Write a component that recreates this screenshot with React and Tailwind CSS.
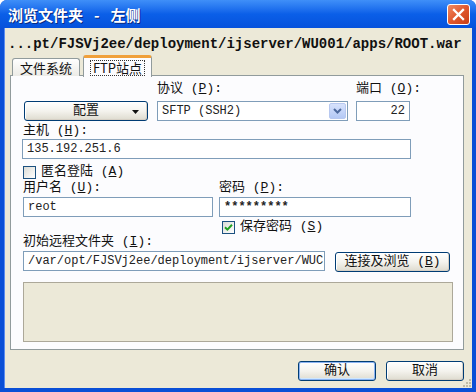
import React from "react";

const MONO = "font-['Liberation_Mono','Noto_Sans_CJK_SC',monospace]";
const LABEL = "font-['Liberation_Mono','Noto_Sans_CJK_SC',monospace] text-[13px] leading-[16px] h-[16px] text-[#111] whitespace-pre";
const INPUT = "h-[20px] border border-[#7f9db9] bg-white flex items-center pl-[4px] font-['Liberation_Mono','Noto_Sans_CJK_SC',monospace] text-[12px] text-[#222] whitespace-pre overflow-hidden";
const BTN = "h-[20px] border border-[#003c74] rounded-[3px] bg-gradient-to-b from-white via-[#f4f3ee] to-[#dedbcf] flex items-center justify-center font-['Liberation_Mono','Noto_Sans_CJK_SC',monospace] text-[13px] text-[#111] whitespace-pre shadow-[inset_-1px_-1px_0_#d6d0c5,inset_1px_1px_0_#ffffff]";

function Check({ checked }) {
  return (
    <div className="w-[13px] h-[13px] border border-[#1c5180] bg-gradient-to-br from-[#dcdcd6] to-white flex items-center justify-center">
      {checked && (
        <svg width="9" height="9" viewBox="0 0 9 9">
          <path d="M1 4.2 L3.4 6.6 L8 1.8" fill="none" stroke="#21a121" strokeWidth="2" />
        </svg>
      )}
    </div>
  );
}

export default function App() {
  return (
    <div className="w-[476px] h-[392px] bg-[#0a4fd6] flex flex-col rounded-t-[7px] overflow-hidden font-['Noto_Sans_CJK_SC','Liberation_Sans',sans-serif]">
      <div className="h-[28px] shrink-0 flex items-center pl-[8px] pr-[6px] bg-gradient-to-b from-[#3f8ff8] via-[#0b5fe8] to-[#0652dc]">
        <span className="text-white font-bold text-[15px] leading-none whitespace-pre [text-shadow:1px_1px_0_#0a2a80] flex items-center">
          浏览文件夹<span className="mx-[11px]">-</span>左侧
        </span>
        <div className="ml-auto w-[23px] h-[21px] rounded-[3px] border border-white bg-gradient-to-br from-[#f08a62] via-[#e0582e] to-[#c83d14] flex items-center justify-center">
          <svg width="13" height="13" viewBox="0 0 13 13">
            <path d="M2 2 L11 11 M11 2 L2 11" stroke="white" strokeWidth="2.3" strokeLinecap="square" />
          </svg>
        </div>
      </div>

      <div className="relative flex-1 ml-[4px] mr-[4px] mb-[4px] bg-[#ece9d8] flex flex-col border-l border-[#5a8cf0]">
        <div className={`pt-[8px] pl-[3px] h-[24px] text-[14px] leading-[16px] font-bold text-[#111] whitespace-pre ${MONO}`}>
          ...pt/FJSVj2ee/deployment/ijserver/WU001/apps/ROOT.war
        </div>

        <div className="mt-[3px] h-[21px] flex items-end pl-[7px] relative z-10">
          <div className="w-[68px] h-[18px] border border-b-0 border-[#919b9c] rounded-t-[3px] bg-gradient-to-b from-white to-[#ecebe6] flex items-center justify-center text-[13px] leading-none text-[#111]">
            文件系统
          </div>
          <div className="ml-[3px] w-[69px] h-[22px] -mb-[1px] border-x border-[#919b9c] rounded-t-[3px] border-t-[3px] border-t-[#f0a03a] bg-[#fcfcfe] flex items-center justify-center">
            <span className="outline outline-1 outline-dotted outline-[#333] px-[2px] text-[13px] leading-[14px] text-[#111]">FTP站点</span>
          </div>
        </div>

        <div className="-mt-px ml-[5px] mr-[8px] h-[275px] border border-[#919b9c] bg-[#fcfcfe] flex flex-col pl-[12px] pt-[5px]">
          <div className="grid grid-cols-[126px_191px_54px] gap-x-[8px]">
            <div />
            <div className={LABEL}>协议 (<u>P</u>):</div>
            <div className={LABEL}>端口 (<u>O</u>):</div>
          </div>
          <div className="mt-[4px] grid grid-cols-[126px_191px_54px] gap-x-[8px] items-start">
            <div className={`${BTN} ml-[1px] w-[124px] relative`}>
              配置
              <svg className="absolute right-[8px] top-[8px]" width="7" height="4" viewBox="0 0 7 4">
                <path d="M0 0 H7 L3.5 4 Z" fill="#111" />
              </svg>
            </div>
            <div className={`${INPUT} pr-[1px]`}>
              <span>SFTP (SSH2)</span>
              <div className="ml-auto w-[17px] h-[16px] rounded-[2px] border border-[#b7c8f0] bg-gradient-to-b from-[#d7e2fc] to-[#b4c9f6] flex items-center justify-center">
                <svg width="9" height="6" viewBox="0 0 9 6">
                  <path d="M1 1 L4.5 4.5 L8 1" fill="none" stroke="#4d6a9e" strokeWidth="2" />
                </svg>
              </div>
            </div>
            <div className={`${INPUT} justify-end pr-[4px]`}>22</div>
          </div>

          <div className={`${LABEL} mt-[2px]`}>主机 (<u>H</u>):</div>
          <div className={`${INPUT} w-[389px] -ml-[1px]`}>135.192.251.6</div>

          <div className="mt-[5px] h-[16px] flex items-center gap-[5px]">
            <Check />
            <div className={LABEL}>匿名登陆 (<u>A</u>)</div>
          </div>

          <div className="grid grid-cols-[190px_192px] gap-x-[6px]">
            <div className={LABEL}>用户名 (<u>U</u>):</div>
            <div className={LABEL}>密码 (<u>P</u>):</div>
            <div className={`${INPUT} mt-[1px]`}>reot</div>
            <div className={`${INPUT} mt-[1px] font-bold`}>*********</div>
            <div />
            <div className="mt-[3px] h-[14px] flex items-center gap-[5px] pl-[3px]">
              <Check checked />
              <div className={LABEL}>保存密码 (<u>S</u>)</div>
            </div>
          </div>

          <div className={LABEL}>初始远程文件夹 (<u>I</u>):</div>
          <div className="mt-[1px] flex items-start">
            <div className={`${INPUT} w-[302px]`}>/var/opt/FJSVj2ee/deployment/ijserver/WUC</div>
            <div className={`${BTN} ml-[10px] w-[115px] mt-[1px] h-[19px]`}>连接及浏览 (<u>B</u>)</div>
          </div>

          <div className="mt-[10px] w-[430px] h-[60px] border border-[#aca899] bg-[#ece9d8]" />
        </div>

        <div className="mt-[11px] flex justify-end gap-[10px] pr-[8px]">
          <div className={`${BTN} w-[78px] shadow-[inset_0_0_0_1px_#8cb4f2,inset_0_-2px_0_#cee7ff]`}>确认</div>
          <div className={`${BTN} w-[78px]`}>取消</div>
        </div>

        <svg className="absolute right-[1px] bottom-[1px]" width="10" height="10" viewBox="0 0 10 10">
          <g fill="#c0bca8">
            <rect x="8" y="2" width="2" height="2" />
            <rect x="5" y="5" width="2" height="2" />
            <rect x="8" y="5" width="2" height="2" />
            <rect x="2" y="8" width="2" height="2" />
            <rect x="5" y="8" width="2" height="2" />
            <rect x="8" y="8" width="2" height="2" />
          </g>
        </svg>
      </div>
    </div>
  );
}
